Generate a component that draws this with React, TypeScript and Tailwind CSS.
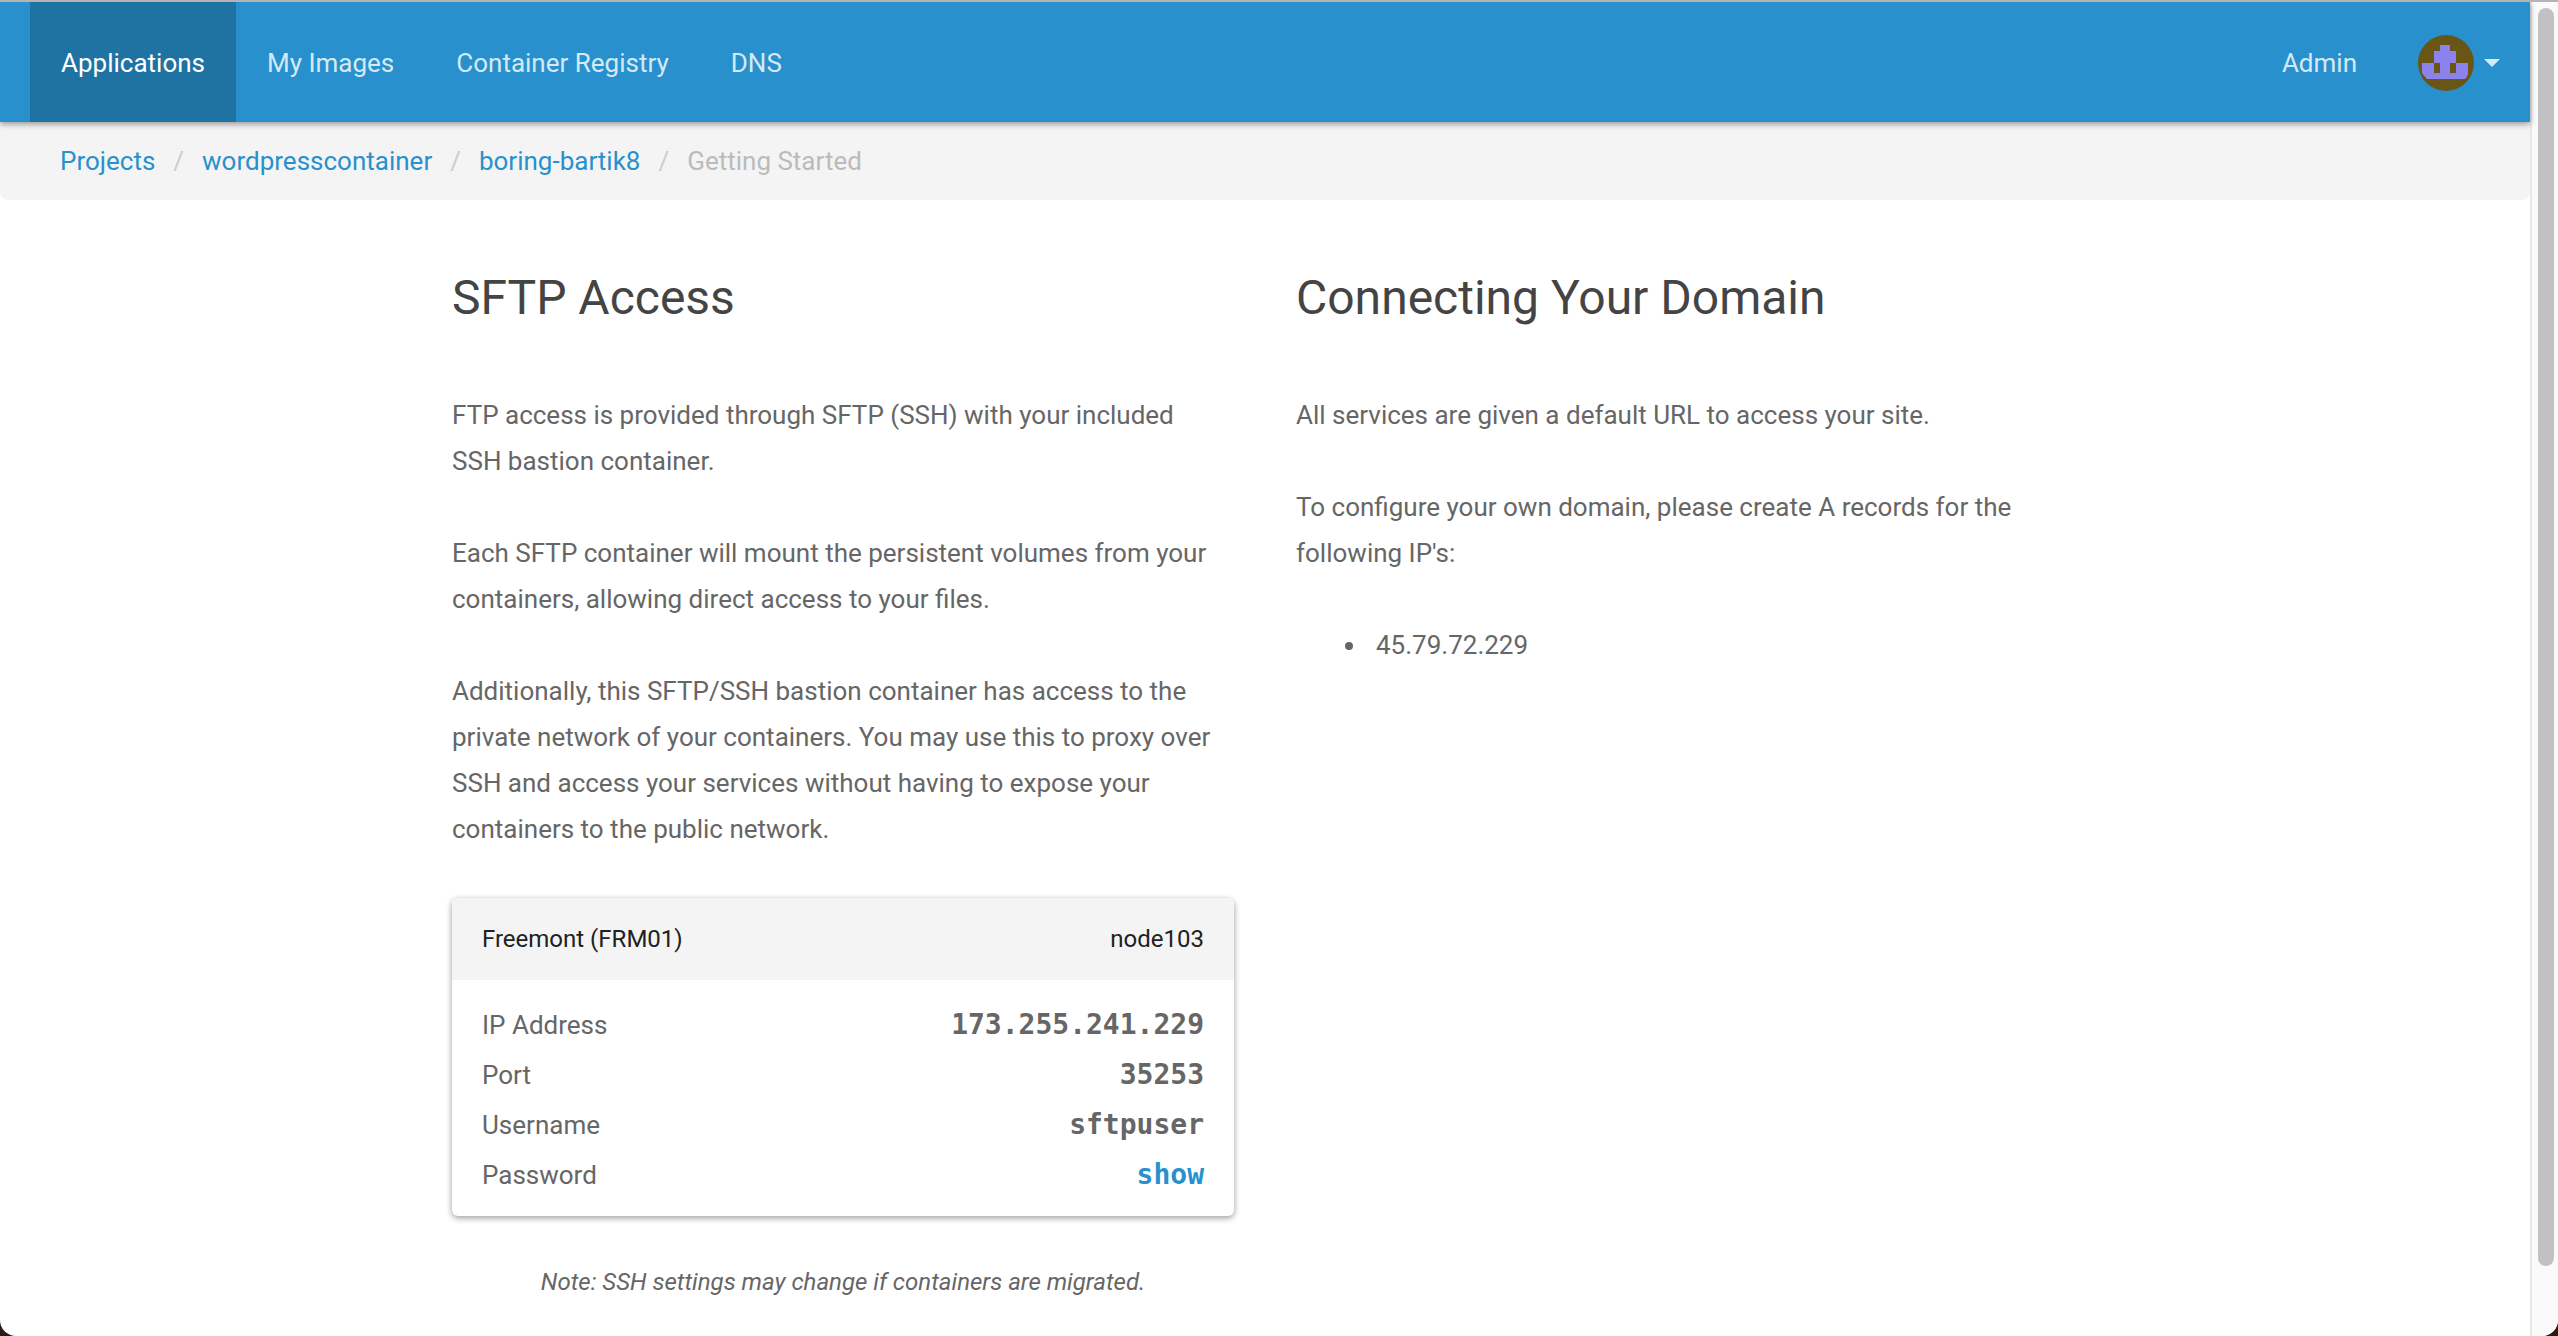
import React from "react";

const navItems = ["Applications", "My Images", "Container Registry", "DNS"];
const crumbs = ["Projects", "wordpresscontainer", "boring-bartik8"];

function Avatar() {
  return (
    <svg width="56" height="56" viewBox="0 0 56 56" aria-hidden="true">
      <circle cx="28" cy="28" r="28" fill="#695616" />
      <path
        d="M22 10h10v6h6v12h12v11q-1 3-3 5H9q-3-3-5-6V28h12V16h6zM16 28v10h6V28zM32 28v10h6V28z"
        fill="#8b82ee"
        fillRule="evenodd"
      />
    </svg>
  );
}

function NavBar() {
  return (
    <header className="relative z-10 flex h-[120px] items-stretch justify-between bg-[#2891cd] px-[30px] shadow-[0_2px_6px_rgba(0,0,0,0.4)]">
      <nav className="flex">
        {navItems.map((item, i) => (
          <a
            key={item}
            href="#"
            className={
              i === 0
                ? "flex items-center bg-[#1f73a3] px-[31px] pt-0.5 text-white"
                : "flex items-center px-[31px] pt-0.5 text-[#d4e9f5]"
            }
          >
            {item}
          </a>
        ))}
      </nav>
      <div className="flex items-stretch">
        <a href="#" className="flex items-center px-[31px] pt-0.5 text-[#d4e9f5]">
          Admin
        </a>
        <button type="button" aria-label="Account menu" className="flex items-center gap-2.5 pt-0.5 pl-[30px]">
          <Avatar />
          <svg width="16" height="8" viewBox="0 0 16 8" aria-hidden="true">
            <path d="M0 0h16L8 8z" fill="#d4e9f5" />
          </svg>
        </button>
      </div>
    </header>
  );
}

function Breadcrumbs() {
  return (
    <nav aria-label="Breadcrumb" className="rounded-b-lg bg-[#f4f4f4] px-[60px]">
      <ol className="flex h-[78px] items-center gap-[18px]">
        {crumbs.map((c) => (
          <li key={c} className="flex gap-[18px]">
            <a href="#" className="text-[#2891cd]">
              {c}
            </a>
            <span className="text-[#cccccc]">/</span>
          </li>
        ))}
        <li className="text-[#bbbbbb]">Getting Started</li>
      </ol>
    </nav>
  );
}

function Row({ label, children }: { label: string; children: React.ReactNode }) {
  return (
    <div className="flex h-[50px] items-center justify-between">
      <dt>{label}</dt>
      <dd className="font-['DejaVu_Sans_Mono',monospace] text-[28px] font-bold">{children}</dd>
    </div>
  );
}

export default function App() {
  return (
    <div className="bg-[#2a1c14]">
      <div className="flex min-h-screen overflow-hidden rounded-b-[16px] border-t-2 border-[#b4b4b4] bg-white font-[Roboto,sans-serif] text-[26px] leading-[46px] text-[#666666]">
        <div className="min-w-0 flex-1">
          <NavBar />
          <Breadcrumbs />
          <main className="mx-auto grid max-w-[1626px] grid-cols-2 gap-[62px] pt-[60px]">
            <section>
              <h1 className="mb-14 text-[48px] leading-[76px] text-[#444444]">SFTP Access</h1>
              <p className="mb-[46px]">
                FTP access is provided through SFTP (SSH) with your included
                <br />
                SSH bastion container.
              </p>
              <p className="mb-[46px]">
                Each SFTP container will mount the persistent volumes from your
                <br />
                containers, allowing direct access to your files.
              </p>
              <p className="mb-[46px]">
                Additionally, this SFTP/SSH bastion container has access to the
                <br />
                private network of your containers. You may use this to proxy over
                <br />
                SSH and access your services without having to expose your
                <br />
                containers to the public network.
              </p>
              <div className="overflow-hidden rounded-md bg-white shadow-[0_2px_6px_rgba(0,0,0,0.4)]">
                <h2 className="flex h-[82px] items-center justify-between bg-[#f4f4f4] px-[30px] text-[24px] text-[#212121]">
                  <span>Freemont (FRM01)</span>
                  <span>node103</span>
                </h2>
                <dl className="px-[30px] pt-5 pb-4">
                  <Row label="IP Address">173.255.241.229</Row>
                  <Row label="Port">35253</Row>
                  <Row label="Username">sftpuser</Row>
                  <Row label="Password">
                    <button type="button" className="cursor-pointer text-[#2891cd]">
                      show
                    </button>
                  </Row>
                </dl>
              </div>
              <p className="mt-[43px] text-center text-[24px] italic">
                Note: SSH settings may change if containers are migrated.
              </p>
            </section>
            <section>
              <h1 className="mb-14 text-[48px] leading-[76px] text-[#444444]">Connecting Your Domain</h1>
              <p className="mb-[46px]">All services are given a default URL to access your site.</p>
              <p className="mb-[46px]">
                To configure your own domain, please create A records for the
                <br />
                following IP's:
              </p>
              <ul className="list-disc pl-18">
                <li className="pl-2">45.79.72.229</li>
              </ul>
            </section>
          </main>
        </div>
        <div className="w-[28px] border-l-2 border-[#e8e8e8] bg-[#fafafa] pt-1.5 pl-1.5">
          <div className="h-[1258px] w-4 rounded-full bg-[#c1c1c1]" />
        </div>
      </div>
    </div>
  );
}
